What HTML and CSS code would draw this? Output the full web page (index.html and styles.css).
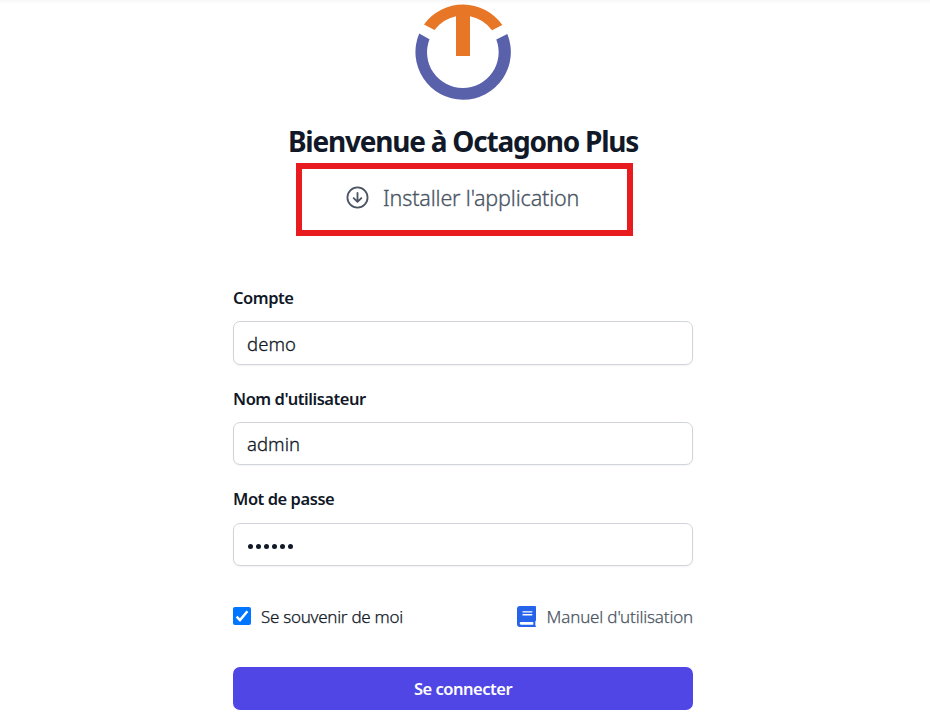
FILE: index.html
```html
<!DOCTYPE html>
<html lang="fr">
<head>
<meta charset="utf-8">
<title>Octagono Plus</title>
<link rel="stylesheet" href="styles.css">
</head>
<body>
<main class="login">
  <svg class="logo" viewBox="0 0 96 96">
    <path fill="#e87627" d="M9 20.500A48 48 0 0 1 87.300 21L77 26.300A36 36 0 0 0 55 12.200V52H41V12.200A36 36 0 0 0 19.500 26Z"/>
    <path fill="#5961ab" d="M4.200 29.500A47.700 47.700 0 1 0 92.300 30L81.300 35.500A35.800 35.800 0 1 1 14.500 35.200Z"/>
  </svg>
  <h1 class="title"><span>Bienvenue à Octagono Plus</span></h1>
  <a class="install">
    <svg class="install-icon" viewBox="0 0 24 24" fill="none" stroke="currentColor" stroke-width="1.9" stroke-linecap="round" stroke-linejoin="round"><circle cx="12" cy="12" r="10.500"/><path d="M12 7.200v9M8 12.600l4 4 4-4"/></svg>
    <span class="install-text">Installer l'application</span>
  </a>
  <form class="form">
    <label class="label l-account" for="account">Compte</label>
    <input class="field" id="account" type="text" value="demo">
    <label class="label l-user" for="user">Nom d'utilisateur</label>
    <input class="field f-user" id="user" type="text" value="admin">
    <label class="label l-pass" for="pass">Mot de passe</label>
    <div class="field f-pass" id="pass"><i></i><i></i><i></i><i></i><i></i><i></i></div>
    <div class="options">
      <span class="check"><svg viewBox="0 0 18 18"><path d="M3.600 9.600l3.400 3.500 7.400-8.900" fill="none" stroke="#fff" stroke-width="2.500"/></svg></span>
      <span class="remember">Se souvenir de moi</span>
      <svg class="book" viewBox="0 0 19 21"><path fill="#2563eb" fill-rule="evenodd" d="M3 0H18Q19 0 19 1V14Q19 15 18.300 15.400V19.500Q19 19.700 19 20.300T18.300 21H3Q0 21 0 18V3Q0 0 3 0ZM4 16Q2.700 16 2.700 17.300T4 18.700H16.300V16ZM5.500 5.200V6.600H15.300V5.200ZM5.500 8V9.400H15.300V8Z"/></svg>
      <span class="manual">Manuel d'utilisation</span>
    </div>
    <button class="submit" type="button">Se connecter</button>
  </form>
</main>
</body>
</html>
```
FILE: styles.css
```css
* { box-sizing: border-box; }
body {
  margin: 0;
  height: 712px;
  overflow: hidden;
  background: linear-gradient(#f7f7f7, #fff 4px);
  font-family: "Noto Sans", "Open Sans", sans-serif;
  color: #111827;
}
.login { width: 460px; margin-left: 233px; padding-top: 4px; display: flex; flex-direction: column; align-items: center; }
.logo { width: 96px; height: 96px; display: block; }
.title { margin: 25px 0 0; height: 34px; font-size: 28px; line-height: 32px; font-weight: 700; letter-spacing: -1.220px; white-space: nowrap; }
.install {
  width: 337px; height: 73px; margin-left: 3px; margin-top: 4px;
  border: 6px solid #e81c1e; padding: 11px 0 0 44px;
  display: flex; align-items: flex-start; color: #4b5563;
  white-space: nowrap;
}
.install-icon { width: 23px; height: 23px; margin-top: 6px; }
.install-text { margin: 1px 0 0 14px; font-size: 21.500px; font-weight: 300; -webkit-text-stroke: .3px; line-height: 34px; letter-spacing: -0.150px; }
.form { width: 460px; margin-top: 49px; display: flex; flex-direction: column; }
.label { height: 36px; line-height: 26px; font-size: 16.500px; font-weight: 600; letter-spacing: -0.450px; align-self: flex-start; white-space: nowrap; }
.l-user, .l-pass { margin-top: 21px; }
.l-pass { height: 37px; }
.field {
  width: 460px; height: 44px; margin: 0; padding: 0 13px; border: 1px solid #d1d5db; border-radius: 7px;
  background: #fff; box-shadow: 0 1px 2px rgba(0,0,0,.05);
  font: 300 18.500px "Noto Sans", sans-serif; -webkit-text-stroke: .3px; letter-spacing: 0.050px; color: #111827; outline: 0;
}
.f-user, .f-pass { height: 43px; }
.f-pass { display: flex; align-items: center; gap: 3px; padding: 4px 0 0 14px; }
.f-pass i { width: 5px; height: 5px; border-radius: 50%; background: #111827; }
.options { display: flex; align-items: center; height: 26px; margin-top: 37px; font-size: 17px; font-weight: 300; -webkit-text-stroke: .25px; letter-spacing: -0.280px; white-space: nowrap; }
.check { width: 18px; height: 18px; background: #0075ff; border-radius: 2px; }
.check svg { display: block; width: 18px; height: 18px; }
.remember { margin-left: 10px; }
.book { width: 19px; height: 21px; margin-left: auto; }
.manual { margin-left: 11px; color: #4b5563; letter-spacing: -0.170px; }
.submit {
  width: 460px; height: 43px; margin: 38px 0 0; padding: 0; border: 0; border-radius: 7px; background: #4f46e5;
  color: #fff; font: 600 16.500px "Noto Sans", sans-serif; letter-spacing: -0.480px;
}
```
